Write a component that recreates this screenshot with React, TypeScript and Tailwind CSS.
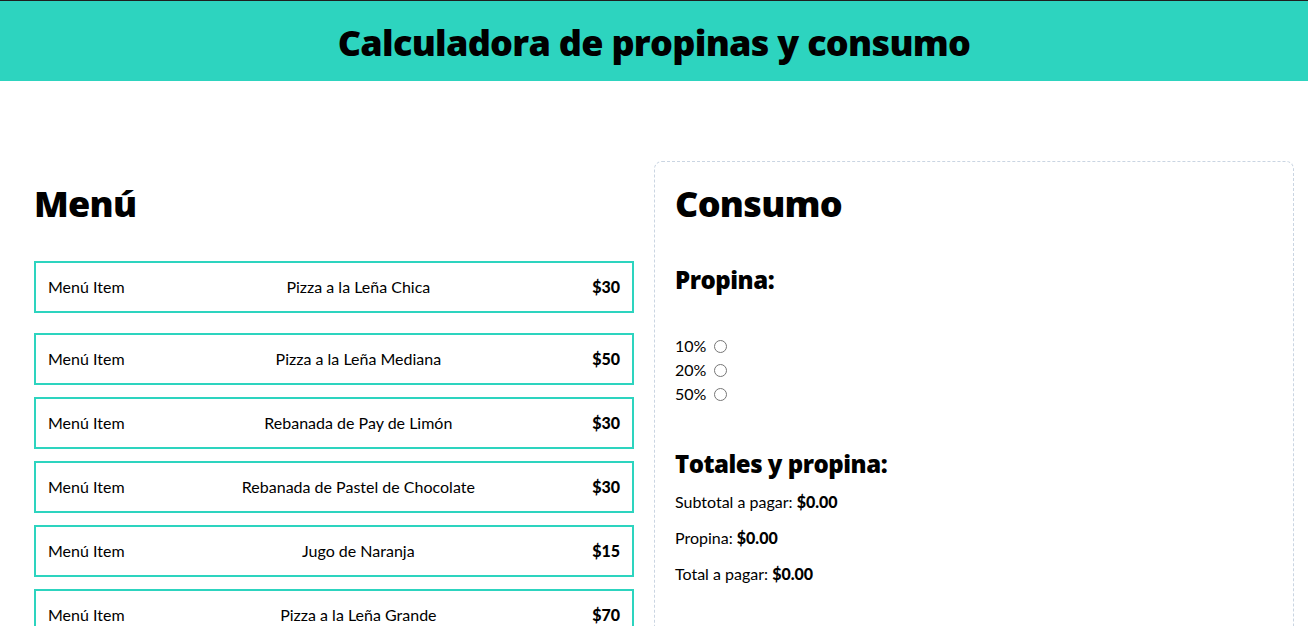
import React from "react";

const items = [
  { name: "Pizza a la Leña Chica", price: 30 },
  { name: "Pizza a la Leña Mediana", price: 50 },
  { name: "Rebanada de Pay de Limón", price: 30 },
  { name: "Rebanada de Pastel de Chocolate", price: 30 },
  { name: "Jugo de Naranja", price: 15 },
  { name: "Pizza a la Leña Grande", price: 70 },
  { name: "Refresco", price: 20 },
];

const heading = "font-['Open_Sans',sans-serif] font-extrabold tracking-[-0.02em]";

export default function App() {
  return (
    <div className="min-h-screen bg-white text-black font-['Lato',sans-serif]">
      <header className="bg-[#2dd4bf] border-t border-[#1f1f1f] pt-[22px] pb-[18px]">
        <h1 className={`text-center text-4xl leading-10 ${heading}`}>Calculadora de propinas y consumo</h1>
      </header>
      <main className="max-w-7xl mx-auto py-20 flex">
        <div className="w-1/2 px-5 pt-[23px]">
          <h2 className={`text-4xl leading-10 ${heading}`}>Menú</h2>
          <div className="mt-[37px] flex flex-col gap-3">
            {items.map((it, i) => (
              <div
                key={it.name}
                className={`border-2 border-[#2dd4bf] px-3 py-3 flex justify-between ${i === 1 ? "mt-2" : ""}`}
              >
                <p>Menú Item</p>
                <p>{it.name}</p>
                <p className="font-black">${it.price}</p>
              </div>
            ))}
          </div>
        </div>
        <div className="w-1/2 border border-dashed border-slate-300 rounded-lg px-5 pt-[22px] pb-5 self-start">
          <h2 className={`text-4xl leading-10 ${heading}`}>Consumo</h2>
          <h3 className={`mt-10 text-2xl leading-8 ${heading}`}>Propina:</h3>
          <form className="mt-[38px]">
            {[10, 20, 50].map((p) => (
              <div key={p} className="flex items-center gap-2">
                <label htmlFor={`tip-${p}`}>{p}%</label>
                <input id={`tip-${p}`} type="radio" name="tip" value={p} className="w-[13px] h-[13px]" />
              </div>
            ))}
          </form>
          <h3 className={`mt-[42px] text-2xl leading-8 ${heading}`}>Totales y propina:</h3>
          <div className="mt-[10px] flex flex-col gap-3">
            <p>
              Subtotal a pagar: <span className="font-black">$0.00</span>
            </p>
            <p>
              Propina: <span className="font-black">$0.00</span>
            </p>
            <p>
              Total a pagar: <span className="font-black">$0.00</span>
            </p>
          </div>
          <div className="h-40" />
        </div>
      </main>
    </div>
  );
}
